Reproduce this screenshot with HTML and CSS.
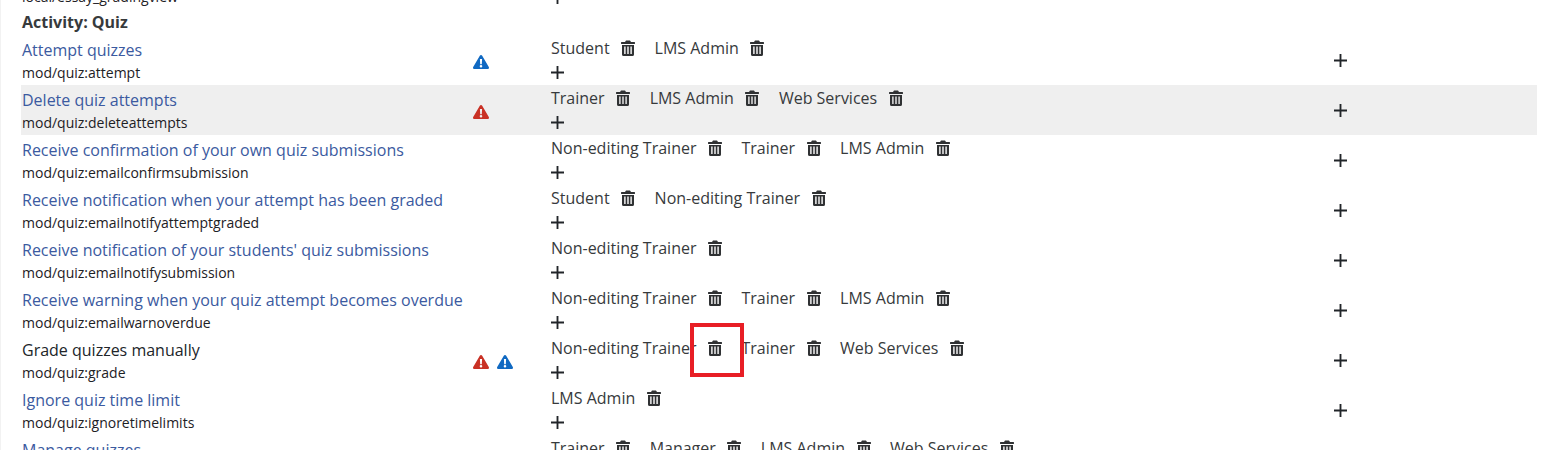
FILE: index.html
```html
<!DOCTYPE html>
<html lang="en">
<head>
    <meta charset="UTF-8">
    <title>Capabilities - Activity: Quiz</title>
    <link rel="stylesheet" href="styles.css">
</head>
<body>
    <svg class="defs" width="0" height="0">
        <symbol id="trash" viewBox="0 0 14 16">
            <path d="M5 0.500h4l1 1.500h3.400a.6.6 0 0 1 .6.6v1a.4.4 0 0 1-.4.4H.4a.4.4 0 0 1-.4-.4v-1A.6.6 0 0 1 .6 2H4z"/>
            <path fill-rule="evenodd" d="M1 5h12v9.400a1.600 1.600 0 0 1-1.600 1.600H2.600A1.600 1.600 0 0 1 1 14.400zM3.200 6.600v7.400h1.400V6.600zM6.300 6.600v7.400h1.400V6.600zM9.400 6.600v7.400h1.400V6.600z"/>
        </symbol>
        <symbol id="risk" viewBox="0 0 16 14">
            <path fill-rule="evenodd" d="M8 0c.5 0 .9.3 1.200.8l6.600 11.200c.5.9-.1 2-1.200 2H1.400C.3 14-.3 12.900.2 12L6.800.8C7.100.3 7.500 0 8 0zM6.900 4l.3 5.200h1.600L9.100 4zM8 10a1.300 1.300 0 1 0 0 2.600A1.300 1.300 0 0 0 8 10z"/>
        </symbol>
        <symbol id="plus" viewBox="0 0 14 14">
            <path d="M6 0h2v6h6v2H8v6H6V8H0V6h6z"/>
        </symbol>
    </svg>

    <div class="page">
        <div class="cap-list">
            <div class="cap-row cap-row-cut">
                <div class="cap-name"><span class="cap-id">local/essay_gradingview</span></div>
                <div class="cap-risks"></div>
                <div class="cap-roles"><svg class="icon-plus"><use href="#plus"/></svg></div>
                <div class="cap-add"></div>
            </div>

            <h3 class="cap-group">Activity: Quiz</h3>

            <div class="cap-row">
                <div class="cap-name"><a href="#">Attempt quizzes</a><span class="cap-id">mod/quiz:attempt</span></div>
                <div class="cap-risks"><svg class="risk risk-blue"><use href="#risk"/></svg></div>
                <div class="cap-roles">
                    <div class="role-line">
                        <span class="role">Student<svg class="icon-trash"><use href="#trash"/></svg></span>
                        <span class="role">LMS Admin<svg class="icon-trash"><use href="#trash"/></svg></span>
                    </div>
                    <svg class="icon-plus"><use href="#plus"/></svg>
                </div>
                <div class="cap-add"><svg class="icon-plus"><use href="#plus"/></svg></div>
            </div>

            <div class="cap-row cap-row-hover">
                <div class="cap-name"><a href="#">Delete quiz attempts</a><span class="cap-id">mod/quiz:deleteattempts</span></div>
                <div class="cap-risks"><svg class="risk risk-red"><use href="#risk"/></svg></div>
                <div class="cap-roles">
                    <div class="role-line">
                        <span class="role">Trainer<svg class="icon-trash"><use href="#trash"/></svg></span>
                        <span class="role">LMS Admin<svg class="icon-trash"><use href="#trash"/></svg></span>
                        <span class="role">Web Services<svg class="icon-trash"><use href="#trash"/></svg></span>
                    </div>
                    <svg class="icon-plus"><use href="#plus"/></svg>
                </div>
                <div class="cap-add"><svg class="icon-plus"><use href="#plus"/></svg></div>
            </div>

            <div class="cap-row">
                <div class="cap-name"><a href="#">Receive confirmation of your own quiz submissions</a><span class="cap-id">mod/quiz:emailconfirmsubmission</span></div>
                <div class="cap-risks"></div>
                <div class="cap-roles">
                    <div class="role-line">
                        <span class="role">Non-editing Trainer<svg class="icon-trash"><use href="#trash"/></svg></span>
                        <span class="role">Trainer<svg class="icon-trash"><use href="#trash"/></svg></span>
                        <span class="role">LMS Admin<svg class="icon-trash"><use href="#trash"/></svg></span>
                    </div>
                    <svg class="icon-plus"><use href="#plus"/></svg>
                </div>
                <div class="cap-add"><svg class="icon-plus"><use href="#plus"/></svg></div>
            </div>

            <div class="cap-row">
                <div class="cap-name"><a href="#">Receive notification when your attempt has been graded</a><span class="cap-id">mod/quiz:emailnotifyattemptgraded</span></div>
                <div class="cap-risks"></div>
                <div class="cap-roles">
                    <div class="role-line">
                        <span class="role">Student<svg class="icon-trash"><use href="#trash"/></svg></span>
                        <span class="role">Non-editing Trainer<svg class="icon-trash"><use href="#trash"/></svg></span>
                    </div>
                    <svg class="icon-plus"><use href="#plus"/></svg>
                </div>
                <div class="cap-add"><svg class="icon-plus"><use href="#plus"/></svg></div>
            </div>

            <div class="cap-row">
                <div class="cap-name"><a href="#">Receive notification of your students' quiz submissions</a><span class="cap-id">mod/quiz:emailnotifysubmission</span></div>
                <div class="cap-risks"></div>
                <div class="cap-roles">
                    <div class="role-line">
                        <span class="role">Non-editing Trainer<svg class="icon-trash"><use href="#trash"/></svg></span>
                    </div>
                    <svg class="icon-plus"><use href="#plus"/></svg>
                </div>
                <div class="cap-add"><svg class="icon-plus"><use href="#plus"/></svg></div>
            </div>

            <div class="cap-row">
                <div class="cap-name"><a href="#">Receive warning when your quiz attempt becomes overdue</a><span class="cap-id">mod/quiz:emailwarnoverdue</span></div>
                <div class="cap-risks"></div>
                <div class="cap-roles">
                    <div class="role-line">
                        <span class="role">Non-editing Trainer<svg class="icon-trash"><use href="#trash"/></svg></span>
                        <span class="role">Trainer<svg class="icon-trash"><use href="#trash"/></svg></span>
                        <span class="role">LMS Admin<svg class="icon-trash"><use href="#trash"/></svg></span>
                    </div>
                    <svg class="icon-plus"><use href="#plus"/></svg>
                </div>
                <div class="cap-add"><svg class="icon-plus"><use href="#plus"/></svg></div>
            </div>

            <div class="cap-row">
                <div class="cap-name"><span class="cap-title">Grade quizzes manually</span><span class="cap-id">mod/quiz:grade</span></div>
                <div class="cap-risks"><svg class="risk risk-red"><use href="#risk"/></svg><svg class="risk risk-blue"><use href="#risk"/></svg></div>
                <div class="cap-roles">
                    <div class="role-line">
                        <span class="role">Non-editing Trainer<svg class="icon-trash"><use href="#trash"/></svg></span>
                        <span class="role">Trainer<svg class="icon-trash"><use href="#trash"/></svg></span>
                        <span class="role">Web Services<svg class="icon-trash"><use href="#trash"/></svg></span>
                    </div>
                    <svg class="icon-plus"><use href="#plus"/></svg>
                </div>
                <div class="cap-add"><svg class="icon-plus"><use href="#plus"/></svg></div>
            </div>

            <div class="cap-row">
                <div class="cap-name"><a href="#">Ignore quiz time limit</a><span class="cap-id">mod/quiz:ignoretimelimits</span></div>
                <div class="cap-risks"></div>
                <div class="cap-roles">
                    <div class="role-line">
                        <span class="role">LMS Admin<svg class="icon-trash"><use href="#trash"/></svg></span>
                    </div>
                    <svg class="icon-plus"><use href="#plus"/></svg>
                </div>
                <div class="cap-add"><svg class="icon-plus"><use href="#plus"/></svg></div>
            </div>

            <div class="cap-row">
                <div class="cap-name"><a href="#">Manage quizzes</a><span class="cap-id">mod/quiz:manage</span></div>
                <div class="cap-risks"></div>
                <div class="cap-roles">
                    <div class="role-line">
                        <span class="role">Trainer<svg class="icon-trash"><use href="#trash"/></svg></span>
                        <span class="role">Manager<svg class="icon-trash"><use href="#trash"/></svg></span>
                        <span class="role">LMS Admin<svg class="icon-trash"><use href="#trash"/></svg></span>
                        <span class="role">Web Services<svg class="icon-trash"><use href="#trash"/></svg></span>
                    </div>
                    <svg class="icon-plus"><use href="#plus"/></svg>
                </div>
                <div class="cap-add"><svg class="icon-plus"><use href="#plus"/></svg></div>
            </div>
        </div>
    </div>

    <!-- Annotation drawn over the screenshot -->
    <div class="highlight-box"></div>
</body>
</html>
```

FILE: styles.css
```css
/* Basic reset */
body, html {
    margin: 0;
    padding: 0;
    height: 100%;
    overflow: hidden;
    background-color: #ffffff;
    font-family: 'Open Sans', 'Liberation Sans', sans-serif;
    font-size: 15px;
    color: #373a3c;
}

.defs {
    position: absolute;
}

/* The page is scrolled, so the first row is cut off at the top */
.page {
    margin-top: -15px;
    padding: 0 14px 0 20px;
    border-left: 1px solid #f2f2f2;
}

.cap-group {
    margin: 0;
    padding-left: 1px;
    height: 25px;
    line-height: 25px;
    font-size: 16px;
    font-weight: 700;
    color: #373a3c;
}

/* Capability rows */
.cap-row {
    display: flex;
    height: 50px;
    box-sizing: border-box;
}

.cap-row-cut {
    height: 25px;
    padding-bottom: 6px;
    overflow: hidden;
    align-items: flex-end;
}

.cap-row-hover {
    background-color: #efefef;
}

.cap-name {
    width: 452px;
    padding-left: 1px;
    display: flex;
    flex-direction: column;
    justify-content: center;
    box-sizing: border-box;
}

.cap-row-cut .cap-name {
    line-height: 18px;
    margin-bottom: -3px;
}

.cap-name a {
    color: #3b5aa0;
    text-decoration: none;
    font-size: 16px;
    line-height: 26px;
}

.cap-title {
    font-size: 16px;
    line-height: 26px;
    color: #212529;
}

.cap-id {
    font-size: 14px;
    line-height: 20px;
    color: #1d2125;
}

/* Risk icons */
.cap-risks {
    width: 78px;
    display: flex;
    align-items: center;
    gap: 8px;
    padding-top: 4px;
    box-sizing: border-box;
}

.risk {
    width: 16px;
    height: 14px;
}

.risk-blue {
    fill: #1069c2;
}

.risk-red {
    fill: #c93125;
}

/* Assigned roles */
.cap-roles {
    width: 783px;
    font-size: 16px;
}

.role-line {
    display: flex;
    height: 26px;
    line-height: 26px;
    gap: 19.5px;
}

.role {
    display: flex;
    align-items: center;
    white-space: nowrap;
}

.icon-trash {
    width: 14px;
    height: 16px;
    margin-left: 11.5px;
    fill: #2f3133;
}

.icon-plus {
    display: block;
    width: 13px;
    height: 13px;
    fill: #212529;
    margin-top: 5px;
}

.cap-add {
    display: flex;
    align-items: center;
}

.cap-add .icon-plus {
    margin-top: 0;
}

/* Red annotation box */
.highlight-box {
    position: absolute;
    left: 690px;
    top: 323px;
    width: 54px;
    height: 54px;
    box-sizing: border-box;
    border: 4px solid #e81e25;
}
```
